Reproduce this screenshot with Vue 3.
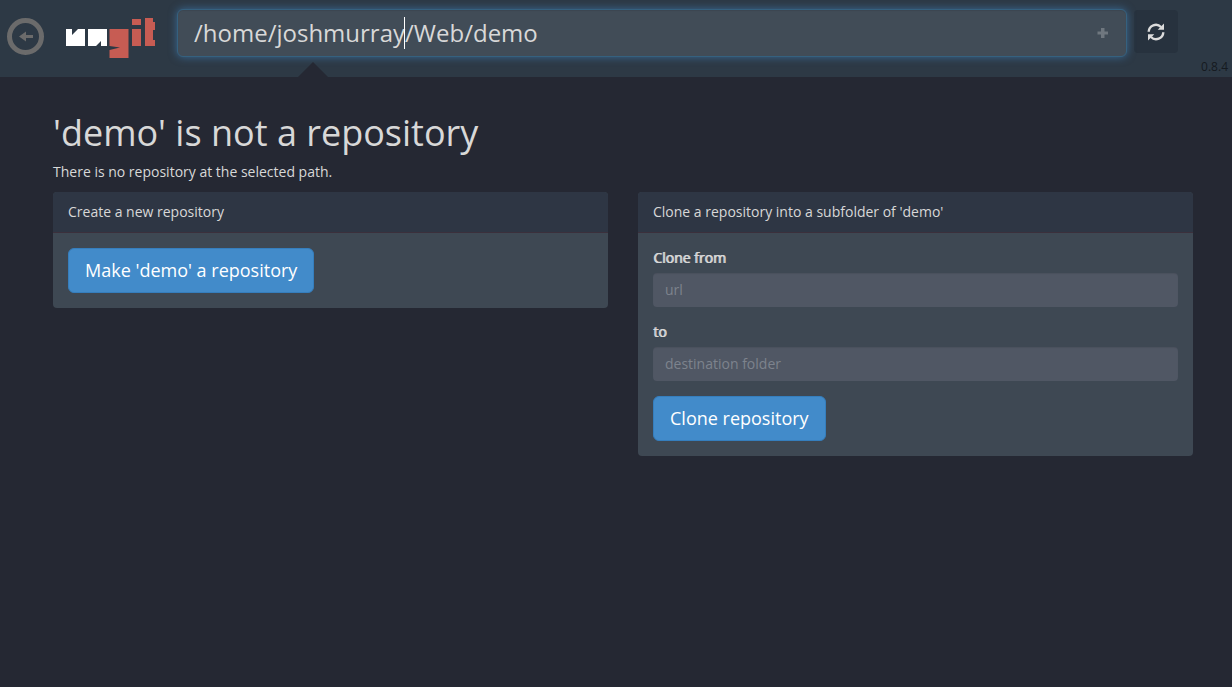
<script setup>
import { ref } from 'vue'

const path = ref('/home/joshmurray/Web/demo')
const cloneUrl = ref('')
const destination = ref('')
</script>

<template>
  <div class="page">
    <header class="navbar">
      <button class="back" type="button" aria-label="Back">
        <svg width="37" height="37" viewBox="0 0 37 37">
          <circle cx="18.500" cy="18.500" r="16" fill="none" stroke="#6b6b6b" stroke-width="5" />
          <path d="M12 18.500L19 13.500V17H26V20H19V23.500Z" fill="#6b6b6b" />
        </svg>
      </button>
      <a class="logo" href="#" aria-label="ungit">
        <svg width="90" height="41" viewBox="0 0 90 41">
          <path d="M0 11H6V17L12 11H19V28H0Z M22 11H41V28H35V23L30 28H22Z" fill="#fff" />
          <path d="M43.500 11H62.500V40H43.500V32L54 29.500L43.500 28Z M66 11H75V28H66Z M66 1H75V7H66Z M79 0H87V4H89V12H87V22H89V28H79Z" fill="#c75c53" />
        </svg>
      </a>
      <div class="path-field">
        <input v-model="path" class="path-input" type="text" aria-label="Repository path" spellcheck="false" />
        <span class="caret"></span>
        <button class="add" type="button" aria-label="Add to home">
          <svg width="12" height="12" viewBox="0 0 12 12">
            <path d="M4 1H7.500V4.500H11V7.500H7.500V11H4V7.500H0.500V4.500H4Z" fill="#6f777f" />
          </svg>
        </button>
        <span class="pointer"></span>
      </div>
      <button class="refresh" type="button" aria-label="Refresh">
        <svg width="18" height="18" viewBox="0 0 18 18">
          <g fill="none" stroke="#dcdcdc" stroke-width="2.400">
            <path d="M1.700 8.800A7.200 7.200 0 0 1 14 4" />
            <path d="M16.300 9.200A7.200 7.200 0 0 1 4 14" />
          </g>
          <path d="M17 0.500V6.800H10.700Z M1 17.500V11.200H7.300Z" fill="#dcdcdc" />
        </svg>
      </button>
      <span class="version">0.8.4</span>
    </header>

    <main class="content">
      <h1>'demo' is not a repository</h1>
      <p class="lead">There is no repository at the selected path.</p>
      <div class="columns">
        <section class="panel">
          <h2 class="panel-heading">Create a new repository</h2>
          <div class="panel-body">
            <button class="btn" type="button">Make 'demo' a repository</button>
          </div>
        </section>
        <section class="panel">
          <h2 class="panel-heading">Clone a repository into a subfolder of 'demo'</h2>
          <form class="panel-body" @submit.prevent>
            <div class="group">
              <label for="clone-url">Clone from</label>
              <input id="clone-url" v-model="cloneUrl" class="control" type="text" placeholder="url" />
            </div>
            <div class="group">
              <label for="destination">to</label>
              <input id="destination" v-model="destination" class="control" type="text" placeholder="destination folder" />
            </div>
            <button class="btn" type="submit">Clone repository</button>
          </form>
        </section>
      </div>
    </main>
  </div>
</template>

<style>
body {
  margin: 0;
  background: #252833;
}
</style>

<style scoped>
.page,
.page * {
  box-sizing: border-box;
}
.page {
  min-height: 100vh;
  background: #252833;
  color: #d8d8d8;
  font: 14px/20px "Open Sans", "Noto Sans", sans-serif;
}
button,
input {
  margin: 0;
  font-family: inherit;
}
.navbar {
  position: relative;
  display: flex;
  align-items: flex-start;
  padding: 9px 54px 18px 7px;
  background: #2d3945;
}
.back {
  margin-top: 9px;
  padding: 0;
  border: 0;
  background: none;
}
.logo {
  margin: 9px 21px 0 22px;
}
.back,
.back svg,
.logo,
.logo svg,
.add svg,
.refresh svg {
  display: block;
}
.path-field {
  position: relative;
  flex: 1;
}
.path-input {
  display: block;
  width: 100%;
  height: 48px;
  padding: 0 48px 1px 16px;
  border: 1px solid #35617f;
  border-radius: 6px;
  outline: 0;
  background: #414c57;
  box-shadow: inset 0 1px 1px rgba(0, 0, 0, 0.075), 0 0 8px rgba(66, 139, 202, 0.6);
  color: #d8d8d8;
  font-size: 24px;
  line-height: 33px;
}
.caret {
  position: absolute;
  top: 8px;
  left: 227px;
  width: 1px;
  height: 32px;
  background: #fff;
}
.add {
  position: absolute;
  top: 18px;
  right: 18px;
  padding: 0;
  border: 0;
  background: none;
}
.pointer {
  position: absolute;
  top: 53px;
  left: 121px;
  border: 15px solid transparent;
  border-top: 0;
  border-bottom-color: #252833;
}
.refresh {
  display: flex;
  align-items: center;
  justify-content: center;
  width: 44px;
  height: 43px;
  margin: 1px 0 0 7px;
  padding: 0;
  border: 0;
  border-radius: 4px;
  background: #27323e;
}
.version {
  position: absolute;
  right: 4px;
  bottom: 2px;
  color: #151a20;
  font-size: 12px;
  line-height: 16px;
}
.content {
  padding: 31px 39px 0 53px;
}
h1 {
  margin: 0;
  font-size: 36px;
  font-weight: 400;
  line-height: 50px;
}
.lead {
  margin: 4px 0 10px;
}
.columns {
  display: grid;
  grid-template-columns: 1fr 1fr;
  gap: 30px;
  align-items: start;
}
.panel {
  overflow: hidden;
  border-radius: 4px;
  background: #3e4853;
}
.panel-heading {
  margin: 0;
  padding: 10px 15px;
  border-bottom: 1px solid #3b303c;
  background: #2e3644;
  font-size: 14px;
  font-weight: 400;
  line-height: 20px;
}
.panel-body {
  padding: 15px;
}
.btn {
  display: block;
  height: 45px;
  padding: 0 16px 2px;
  border: 1px solid #357ebd;
  border-radius: 6px;
  background: #428bca;
  color: #fff;
  font-size: 18px;
  line-height: 24px;
}
.group {
  margin-bottom: 15px;
}
label {
  display: block;
  margin-bottom: 5px;
  text-shadow: 1px 0 0 #d8d8d8;
}
.control {
  display: block;
  width: 100%;
  height: 34px;
  padding: 0 12px 2px;
  border: 0;
  border-radius: 4px;
  background: #505764;
  box-shadow: inset 0 1px 1px rgba(0, 0, 0, 0.075);
  color: #d8d8d8;
  font-size: 14px;
}
.control::placeholder {
  color: #7d838d;
  opacity: 1;
}
</style>
